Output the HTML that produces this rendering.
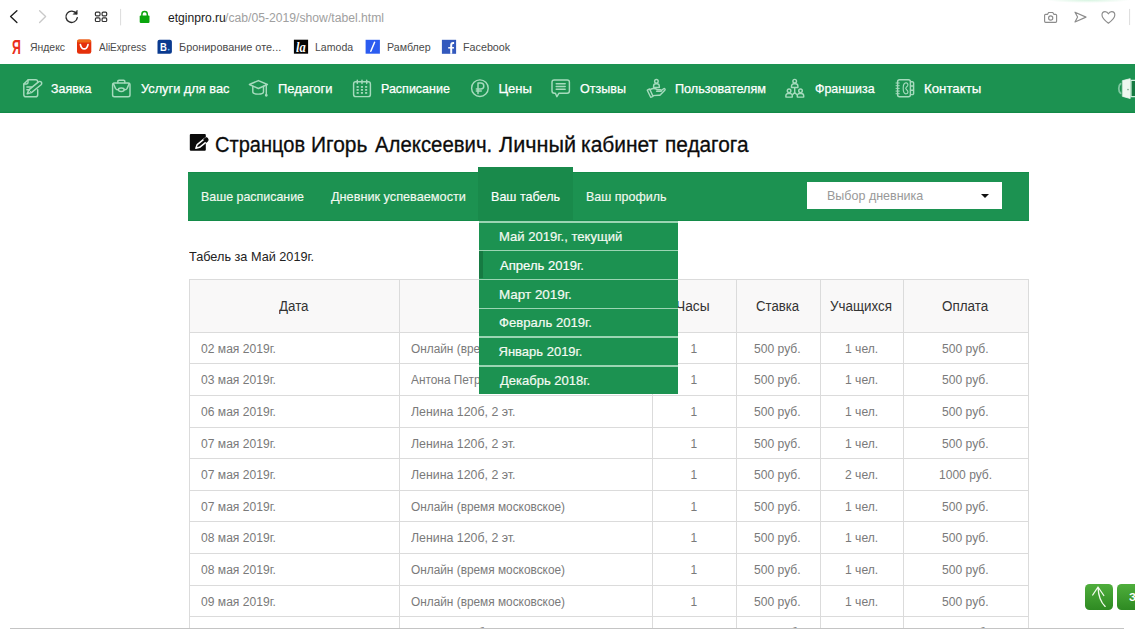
<!DOCTYPE html>
<html lang="ru"><head><meta charset="utf-8"><title>Табель</title>
<style>
html,body{margin:0;padding:0;background:#fff;}
body{width:1135px;height:629px;position:relative;overflow:hidden;font-family:"Liberation Sans",sans-serif;}
.t{position:absolute;white-space:pre;z-index:2;}
.a{position:absolute;}
#nav{left:0;top:63.5px;width:1135px;height:49.3px;background:#1c9251;box-shadow:inset 0 -1.2px 0 #128a47;}
#sub{left:188.3px;top:172.4px;width:840.6px;height:48.3px;background:#1c9251;box-shadow:inset 0 1px 0 #148b49, inset 0 -1px 0 #148b49;}
#tab{left:477.8px;top:166.8px;width:95.3px;height:53.9px;background:#198a4b;}
#sel{left:806.5px;top:182.2px;width:195.5px;height:26.8px;background:#fff;}
#arr{left:980.9px;top:193.8px;width:0;height:0;border-left:4.8px solid transparent;border-right:4.8px solid transparent;border-top:4.7px solid #111;}
#dd{left:478.7px;top:220.5px;width:199.7px;height:173.7px;background:#1c9251;z-index:5;}
#dd i{position:absolute;left:0;width:100%;height:1.6px;background:#9bd5b3;}
#dd b{position:absolute;left:0;top:30.2px;width:4.3px;height:27.6px;background:#167a42;}
#tbl{left:188.5px;top:279px;width:840.4px;height:360px;z-index:1;}
#tbl .hd{position:absolute;left:0;top:0;width:100%;height:53.3px;background:#f9f8f8;}
#tbl .h{position:absolute;left:0;width:100%;height:1px;background:#dbdbdb;}
#tbl .v{position:absolute;top:0;width:1px;height:100%;background:#dbdbdb;}
#bar{left:10px;top:627.6px;width:1114px;height:2px;background:#c4c4c4;z-index:7;}
.btn{position:absolute;top:583.6px;height:26.2px;border-radius:4.5px;background:linear-gradient(#4fae3c,#2e8a22);z-index:3;}
#glow{left:1046px;top:0;width:84px;height:2.5px;background:radial-gradient(ellipse at 50% 0,#d6f4e0 0,#fff 70%);}

</style></head>
<body>
<div class="a" id="glow"></div>
<div class="a" id="nav"></div>
<div class="a" id="sub"></div>
<div class="a" id="tab"></div>
<div class="a" id="sel"></div>
<div class="a" id="arr"></div>
<div class="a" id="tbl">
  <div class="hd"></div>
  <div class="h" style="top:0"></div>
  <div class="h" style="top:52.8px"></div>
  <div class="h" style="top:84.4px"></div>
  <div class="h" style="top:116px"></div>
  <div class="h" style="top:147.6px"></div>
  <div class="h" style="top:179.2px"></div>
  <div class="h" style="top:210.8px"></div>
  <div class="h" style="top:242.4px"></div>
  <div class="h" style="top:274px"></div>
  <div class="h" style="top:305.6px"></div>
  <div class="h" style="top:337.2px"></div>
  <div class="v" style="left:0"></div>
  <div class="v" style="left:210.4px"></div>
  <div class="v" style="left:463.3px"></div>
  <div class="v" style="left:547.7px"></div>
  <div class="v" style="left:631.2px"></div>
  <div class="v" style="left:714.8px"></div>
  <div class="v" style="left:839.4px"></div>
</div>
<div class="a" id="dd">
  <i style="top:0.6px"></i><i style="top:29.4px"></i><i style="top:58.2px"></i><i style="top:87px"></i><i style="top:115.8px"></i><i style="top:144.6px"></i>
  <b></b>
</div>
<div class="btn" style="left:1085.4px;width:27.6px"></div>
<div class="btn" style="left:1117px;width:30px"></div>
<div class="a" id="bar"></div>
<svg class="a" id="ico" style="left:0;top:0;z-index:3" width="1135" height="629" viewBox="0 0 1135 629" fill="none" stroke-linecap="round" stroke-linejoin="round">
 <!-- browser chrome: back / forward / reload / grid / lock -->
 <path d="M16.9 10.7 L10.6 16.6 L16.9 22.5" stroke="#1d1d1d" stroke-width="1.35"/>
 <path d="M39.6 10.7 L45.6 16.6 L39.6 22.5" stroke="#c9c9c9" stroke-width="1.35"/>
 <path d="M76.4 13.6 A5.7 5.7 0 1 0 77.3 17.6" stroke="#2a2a2a" stroke-width="1.35"/>
 <path d="M77.2 10.6 V14.3 H73.5 Z" fill="#2a2a2a" stroke="#2a2a2a" stroke-width="0.6"/>
 <g stroke="#333" stroke-width="1.2">
  <rect x="95.4" y="12.1" width="4.6" height="3.7" rx="1.1"/><rect x="102.1" y="12.1" width="4.6" height="3.7" rx="1.1"/>
  <rect x="95.4" y="17.8" width="4.6" height="3.7" rx="1.1"/><rect x="102.1" y="17.8" width="4.6" height="3.7" rx="1.1"/>
 </g>
 <path d="M120.6 9.3 V25" stroke="#dcdcdc" stroke-width="1"/>
 <rect x="139.7" y="15.6" width="9.8" height="7.3" rx="0.8" fill="#0aa60d" stroke="none"/>
 <path d="M141.9 15.8 V14.2 A2.7 2.7 0 0 1 147.3 14.2 V15.8" stroke="#0aa60d" stroke-width="1.5"/>
 <!-- right chrome icons -->
 <g stroke="#8c8c8c" stroke-width="1.15">
  <path d="M1045.6 14.3 H1047.6 L1048.6 12.5 H1052.8 L1053.8 14.3 H1055.6 A1 1 0 0 1 1056.6 15.3 V21.3 A1 1 0 0 1 1055.6 22.3 H1045.6 A1 1 0 0 1 1044.6 21.3 V15.3 A1 1 0 0 1 1045.6 14.3 Z"/>
  <circle cx="1050.7" cy="18" r="2.1"/>
  <path d="M1075 12.2 L1086 17.1 L1075 22 L1077.6 17.1 Z"/>
  <path d="M1108.4 23.2 C1104.5 20.2 1102 17.6 1102 14.9 C1102 12.9 1103.5 11.6 1105.1 11.6 C1106.5 11.6 1107.7 12.4 1108.4 13.8 C1109.1 12.4 1110.3 11.6 1111.7 11.6 C1113.3 11.6 1114.8 12.9 1114.8 14.9 C1114.8 17.6 1112.3 20.2 1108.4 23.2 Z"/>
 </g>
 <path d="M1129.6 9.3 V24.7" stroke="#dcdcdc" stroke-width="1"/>
 <!-- bookmark favicons -->
 <rect x="77" y="39.6" width="14.3" height="14.2" rx="2.2" fill="#e5300a" stroke="none"/>
 <rect x="77" y="39.6" width="14.3" height="3" rx="2" fill="#f07c1c" stroke="none" opacity=".75"/>
 <path d="M80.4 44.6 C81 47.4 82.4 48.9 84.2 48.9 C86 48.9 87.4 47.4 88 44.6" stroke="#fff" stroke-width="1.7"/>
 <path d="M159.5 39.7 H169.9 A2 2 0 0 1 171.9 41.7 V51.7 A2 2 0 0 1 169.9 53.7 H157.5 V41.7 A2 2 0 0 1 159.5 39.7 Z" fill="#0a3a8f" stroke="none"/>
 <circle cx="168.7" cy="49.6" r="0.95" fill="#5db8f7" stroke="none"/>
 <rect x="293.9" y="39.7" width="14.2" height="14" fill="#050505" stroke="none"/>
 <rect x="365.6" y="39.8" width="14.3" height="13.9" fill="#2b5cf0" stroke="none"/>
 <path d="M370.8 51.3 L374.6 42.2" stroke="#fff" stroke-width="1.5"/>
 <rect x="441.9" y="39.8" width="14.2" height="14" fill="#3359bd" stroke="none"/>
 <path d="M451.2 53.8 V45 C451.2 43.6 452 43 453.2 43 H454.1" stroke="#fff" stroke-width="2" stroke-linecap="butt"/>
 <path d="M448.2 47.8 H454" stroke="#fff" stroke-width="1.5" stroke-linecap="butt"/>
 <!-- nav icons -->
 <g stroke="#a6dbbd" stroke-width="1.45">
  <!-- 1 application -->
  <path d="M37.7 82.4 V81.8 A2.1 2.1 0 0 0 35.6 79.7 H28.2 L23.8 84 V94.7 A2.1 2.1 0 0 0 25.9 96.8 H35.6 A2.1 2.1 0 0 0 37.7 94.7 V89.6"/>
  <path d="M24 83.9 H26.6 A1.4 1.4 0 0 0 28 82.5 V79.9"/>
  <path d="M26.9 86.9 H31.8 M26.9 89.7 H29.4"/>
  <path d="M27.2 93.7 L28.8 89.9 L38.5 81.9 A1.9 1.9 0 0 1 41.1 84.7 L31.4 92.6 Z"/>
  <path d="M29.6 90.6 L31 92.2" stroke-width="1"/>
  <!-- 2 briefcase -->
  <rect x="112.6" y="83" width="17.4" height="13.8" rx="1.8"/>
  <path d="M117.8 82.8 V81.4 A1.2 1.2 0 0 1 119 80.2 H123.6 A1.2 1.2 0 0 1 124.8 81.4 V82.8"/>
  <path d="M113.4 83.6 L115.6 88.6 C116.4 89.7 117.4 89.8 118.4 89.8 M124.2 89.8 C125.2 89.8 126.2 89.7 127 88.6 L129.2 83.6"/>
  <ellipse cx="121.3" cy="89.7" rx="2.9" ry="1.7"/>
  <!-- 3 graduation cap -->
  <path d="M258.4 80.6 L267.4 84.5 L258.4 88.5 L249.4 84.5 Z"/>
  <path d="M252.8 86.2 V92 C252.8 93.4 255.4 94.1 258.2 94.1 C261 94.1 263.5 93.4 263.5 92 V86.2"/>
  <path d="M266.3 85 V95"/><circle cx="266.3" cy="95.3" r="0.7" fill="#a3d8b9"/>
  <!-- 4 calendar -->
  <rect x="353.6" y="81.8" width="16.8" height="14.8" rx="2.2"/>
  <path d="M357.3 80.1 V83.5 M362 80.1 V83.5 M366.7 80.1 V83.5"/>
  <g fill="#a3d8b9" stroke="none">
   <rect x="356.6" y="86" width="2.1" height="1.8"/><rect x="360.9" y="86" width="2.1" height="1.8"/><rect x="365.1" y="86" width="2.1" height="1.8"/>
   <rect x="356.6" y="89" width="2.1" height="1.8"/><rect x="360.9" y="89" width="2.1" height="1.8"/><rect x="365.1" y="89" width="2.1" height="1.8"/>
   <rect x="356.6" y="92" width="2.1" height="1.8"/><rect x="360.9" y="92" width="2.1" height="1.8"/><rect x="365.1" y="92" width="2.1" height="1.8"/>
  </g>
  <!-- 5 ruble -->
  <circle cx="479.9" cy="88.2" r="8.3"/>
  <path d="M478 93.6 V83 H480.8 A3 3 0 0 1 480.8 89 H476.3 M476.3 91 H481.3" stroke-width="1.5"/>
  <!-- 6 comments -->
  <path d="M554.2 79.9 H567.2 A2.2 2.2 0 0 1 569.4 82.1 V91 A2.2 2.2 0 0 1 567.2 93.2 H559 L556.9 96.7 L555.4 93.2 H554.2 A2.2 2.2 0 0 1 552 91 V82.1 A2.2 2.2 0 0 1 554.2 79.9 Z"/>
  <path d="M556.2 83.7 H565.2 M556.2 86.5 H565.2 M556.2 89.2 H565.2"/>
  <!-- 7 hand with user -->
  <circle cx="656.4" cy="81.3" r="1.8"/>
  <path d="M653.6 87.5 V86 A2.3 2.3 0 0 1 655.9 83.7 H657 A2.3 2.3 0 0 1 659.3 86 V87.5 Z"/>
  <path d="M647.3 90.2 L649.6 88.9 L653 96.3 L650.7 97.3 Z"/>
  <path d="M650.2 89.6 C652.4 88.2 655 88.2 657.4 89.6 L660.6 89.6 C661.8 89.6 661.8 91.3 660.6 91.3 H656.6 M660.8 91 L663.6 88.8 C664.6 88.2 665.6 89.4 664.8 90.3 L660.6 94.6 C660 95.1 659.4 95.3 658.6 95.3 L652.6 95.6"/>
  <!-- 8 franchise -->
  <circle cx="794.7" cy="81.2" r="1.8"/>
  <path d="M791.5 87.5 V86.2 A2.4 2.4 0 0 1 793.9 83.8 H795.5 A2.4 2.4 0 0 1 797.9 86.2 V87.5 Z"/>
  <circle cx="789.1" cy="90.8" r="1.8"/>
  <path d="M785.9 97.1 V95.8 A2.4 2.4 0 0 1 788.3 93.4 H789.9 A2.4 2.4 0 0 1 792.3 95.8 V97.1 Z"/>
  <circle cx="800.5" cy="90.8" r="1.8"/>
  <path d="M797.3 97.1 V95.8 A2.4 2.4 0 0 1 799.7 93.4 H801.3 A2.4 2.4 0 0 1 803.7 95.8 V97.1 Z"/>
  <path d="M794.7 87.8 V92.4 L792.7 94.4 M794.7 92.4 L796.7 94.4"/>
  <!-- 9 contacts -->
  <rect x="897.6" y="79.8" width="12.8" height="17" rx="2"/>
  <path d="M896 83 H899.3 M896 85.7 H899.3 M896 88.4 H899.3 M896 91.1 H899.3 M896 93.7 H899.3" stroke-width="1"/>
  <path d="M910.6 81.8 H912.4 A1.2 1.2 0 0 1 913.6 83 V93.4 A1.2 1.2 0 0 1 912.4 94.6 H910.6 M910.6 86 H913.4 M910.6 90.3 H913.4"/>
  <path d="M906.3 82.9 C904.2 82.6 903.2 84.6 903.2 88.3 C903.2 92 904.2 94.1 906.3 93.8 C907.8 93.6 908.3 92 907.6 90.8 L906.2 89.2 C905.6 88.6 905.6 87.9 906.2 87.3 L907.6 85.8 C908.3 84.7 907.8 83.1 906.3 82.9 Z" stroke-width="1.15"/>
 </g>
 <!-- exit door (cropped at right edge) -->
 <path d="M1120.6 83.8 C1118.2 85.6 1118.2 91.4 1120.6 93.2" stroke="#7fc7a0" stroke-width="1.8"/>
 <path d="M1122.7 80.6 L1130.2 78.7 V98.5 L1122.7 96.4 Z" fill="#eef8f0" stroke="#eef8f0" stroke-width="0.8"/>
 <circle cx="1128" cy="89.6" r="0.8" fill="#7aa58a" stroke="none"/>
 <rect x="1131" y="80.4" width="8" height="16.2" fill="#157a41" stroke="#cfeedd" stroke-width="1.2"/>
 <!-- heading icon -->
 <rect x="189.8" y="134.1" width="16" height="16.6" rx="1" fill="#0a0a0a" stroke="none"/>
 <path d="M195.9 148.2 L197.2 144.6 L204.6 138.7 A1.8 1.8 0 0 1 207 141.4 L199.6 147.3 Z" fill="#0a0a0a" stroke="#fff" stroke-width="1.5"/>
 <path d="M203.9 139.3 L206.3 142 L207.4 141 A1.6 1.6 0 0 0 205.1 138.4 Z" fill="#0a0a0a" stroke="#0a0a0a" stroke-width="1.2"/>
 <!-- scroll-up buttons -->
 <path d="M1098 587.2 C1098.4 595.2 1100.4 602 1105.2 606.4 M1092.7 595 L1098 587 L1103.8 595.5" stroke="#f4fbef" stroke-width="1.3"/>
</svg>

<div id="texts">
<span class="t" style="left:168.0px;top:11.7px;font-size:12.5px;line-height:13.96px;color:#1a1a1a;transform-origin:0 0;transform:scaleX(0.968);">etginpro.ru</span>
<span class="t" style="left:225.1px;top:11.7px;font-size:12.5px;line-height:13.96px;color:#a0a0a0;transform-origin:0 0;transform:scaleX(0.974);">/cab/05-2019/show/tabel.html</span>
<span class="t" style="left:12.0px;top:37.3px;font-size:19.6px;line-height:21.89px;color:#ea2f1b;font-weight:bold;z-index:4;transform-origin:0 0;transform:scaleX(0.633);">Я</span>
<span class="t" style="left:160.2px;top:40.7px;font-size:11.4px;line-height:12.73px;color:#fff;font-weight:bold;z-index:4;transform-origin:0 0;transform:scaleX(0.829);">B</span>
<span class="t" style="left:296.4px;top:39.4px;font-size:15px;line-height:16.75px;color:#fff;font-family:'Liberation Serif',serif;font-style:italic;font-weight:bold;z-index:4;transform-origin:0 0;transform:scaleX(0.833);">la</span>
<span class="t" style="left:1128.8px;top:590.6px;font-size:11.5px;line-height:12.85px;color:#fff;font-weight:bold;z-index:4;transform-origin:0 0;transform:scaleX(0.966);">Задать вопрос</span>
<span class="t" style="left:30.0px;top:41.0px;font-size:11px;line-height:12.29px;color:#4a4a4a;transform-origin:0 0;transform:scaleX(0.947);">Яндекс</span>
<span class="t" style="left:98.6px;top:41.0px;font-size:11px;line-height:12.29px;color:#4a4a4a;transform-origin:0 0;transform:scaleX(0.910);">AliExpress</span>
<span class="t" style="left:178.8px;top:41.0px;font-size:11px;line-height:12.29px;color:#4a4a4a;transform-origin:0 0;transform:scaleX(0.990);">Бронирование оте...</span>
<span class="t" style="left:314.9px;top:41.0px;font-size:11px;line-height:12.29px;color:#4a4a4a;transform-origin:0 0;transform:scaleX(0.959);">Lamoda</span>
<span class="t" style="left:386.6px;top:41.0px;font-size:11px;line-height:12.29px;color:#4a4a4a;transform-origin:0 0;transform:scaleX(0.970);">Рамблер</span>
<span class="t" style="left:462.8px;top:41.0px;font-size:11px;line-height:12.29px;color:#4a4a4a;transform-origin:0 0;transform:scaleX(0.977);">Facebook</span>
<span class="t" style="left:50.9px;top:82.2px;font-size:13px;line-height:14.52px;color:#ffffff;-webkit-text-stroke:0.25px #fff;transform-origin:0 0;transform:scaleX(0.956);">Заявка</span>
<span class="t" style="left:140.5px;top:82.2px;font-size:13px;line-height:14.52px;color:#ffffff;-webkit-text-stroke:0.25px #fff;transform-origin:0 0;transform:scaleX(0.983);">Услуги для вас</span>
<span class="t" style="left:278.3px;top:82.2px;font-size:13px;line-height:14.52px;color:#ffffff;-webkit-text-stroke:0.25px #fff;transform-origin:0 0;transform:scaleX(0.994);">Педагоги</span>
<span class="t" style="left:381.2px;top:82.2px;font-size:13px;line-height:14.52px;color:#ffffff;-webkit-text-stroke:0.25px #fff;transform-origin:0 0;transform:scaleX(0.961);">Расписание</span>
<span class="t" style="left:498.5px;top:82.2px;font-size:13px;line-height:14.52px;color:#ffffff;-webkit-text-stroke:0.25px #fff;transform-origin:0 0;transform:scaleX(1.000);">Цены</span>
<span class="t" style="left:580.2px;top:82.2px;font-size:13px;line-height:14.52px;color:#ffffff;-webkit-text-stroke:0.25px #fff;transform-origin:0 0;transform:scaleX(0.965);">Отзывы</span>
<span class="t" style="left:674.8px;top:82.2px;font-size:13px;line-height:14.52px;color:#ffffff;-webkit-text-stroke:0.25px #fff;transform-origin:0 0;transform:scaleX(0.972);">Пользователям</span>
<span class="t" style="left:814.5px;top:82.2px;font-size:13px;line-height:14.52px;color:#ffffff;-webkit-text-stroke:0.25px #fff;transform-origin:0 0;transform:scaleX(0.955);">Франшиза</span>
<span class="t" style="left:924.4px;top:82.2px;font-size:13px;line-height:14.52px;color:#ffffff;-webkit-text-stroke:0.25px #fff;transform-origin:0 0;transform:scaleX(1.019);">Контакты</span>
<span class="t" style="left:215.3px;top:133.1px;font-size:22px;line-height:24.57px;color:#0c0c0c;-webkit-text-stroke:0.3px #0c0c0c;transform-origin:0 0;transform:scaleX(0.911);">Странцов</span>
<span class="t" style="left:310.8px;top:133.1px;font-size:22px;line-height:24.57px;color:#0c0c0c;-webkit-text-stroke:0.3px #0c0c0c;transform-origin:0 0;transform:scaleX(0.951);">Игорь</span>
<span class="t" style="left:374.8px;top:133.1px;font-size:22px;line-height:24.57px;color:#0c0c0c;-webkit-text-stroke:0.3px #0c0c0c;transform-origin:0 0;transform:scaleX(0.925);">Алексеевич.</span>
<span class="t" style="left:498.7px;top:133.1px;font-size:22px;line-height:24.57px;color:#0c0c0c;-webkit-text-stroke:0.3px #0c0c0c;transform-origin:0 0;transform:scaleX(0.981);">Личный</span>
<span class="t" style="left:581.4px;top:133.1px;font-size:22px;line-height:24.57px;color:#0c0c0c;-webkit-text-stroke:0.3px #0c0c0c;transform-origin:0 0;transform:scaleX(0.953);">кабинет</span>
<span class="t" style="left:665.3px;top:133.1px;font-size:22px;line-height:24.57px;color:#0c0c0c;-webkit-text-stroke:0.3px #0c0c0c;transform-origin:0 0;transform:scaleX(0.946);">педагога</span>
<span class="t" style="left:201.2px;top:190.2px;font-size:13px;line-height:14.52px;color:#f2f9f0;-webkit-text-stroke:0.15px #f2f9f0;transform-origin:0 0;transform:scaleX(0.955);">Ваше расписание</span>
<span class="t" style="left:330.9px;top:190.2px;font-size:13px;line-height:14.52px;color:#f2f9f0;-webkit-text-stroke:0.15px #f2f9f0;transform-origin:0 0;transform:scaleX(0.977);">Дневник успеваемости</span>
<span class="t" style="left:490.9px;top:190.2px;font-size:13px;line-height:14.52px;color:#fff;-webkit-text-stroke:0.15px #fff;transform-origin:0 0;transform:scaleX(0.966);">Ваш табель</span>
<span class="t" style="left:586.2px;top:190.2px;font-size:13px;line-height:14.52px;color:#f2f9f0;-webkit-text-stroke:0.15px #f2f9f0;transform-origin:0 0;transform:scaleX(0.961);">Ваш профиль</span>
<span class="t" style="left:827.0px;top:189.2px;font-size:13px;line-height:14.52px;color:#999;transform-origin:0 0;transform:scaleX(0.962);">Выбор дневника</span>
<span class="t" style="left:498.5px;top:230.2px;font-size:13px;line-height:14.52px;color:#f4faf2;-webkit-text-stroke:0.2px #f4faf2;z-index:6;transform-origin:0 0;transform:scaleX(1.006);">Май 2019г., текущий</span>
<span class="t" style="left:499.5px;top:259.2px;font-size:13px;line-height:14.52px;color:#fff;-webkit-text-stroke:0.2px #f4faf2;z-index:6;transform-origin:0 0;transform:scaleX(1.006);">Апрель 2019г.</span>
<span class="t" style="left:498.5px;top:288.2px;font-size:13px;line-height:14.52px;color:#f4faf2;-webkit-text-stroke:0.2px #f4faf2;z-index:6;transform-origin:0 0;transform:scaleX(1.034);">Март 2019г.</span>
<span class="t" style="left:498.5px;top:316.2px;font-size:13px;line-height:14.52px;color:#f4faf2;-webkit-text-stroke:0.2px #f4faf2;z-index:6;transform-origin:0 0;transform:scaleX(1.008);">Февраль 2019г.</span>
<span class="t" style="left:498.5px;top:345.2px;font-size:13px;line-height:14.52px;color:#f4faf2;-webkit-text-stroke:0.2px #f4faf2;z-index:6;transform-origin:0 0;transform:scaleX(1.000);">Январь 2019г.</span>
<span class="t" style="left:499.5px;top:374.2px;font-size:13px;line-height:14.52px;color:#f4faf2;-webkit-text-stroke:0.2px #f4faf2;z-index:6;transform-origin:0 0;transform:scaleX(1.001);">Декабрь 2018г.</span>
<span class="t" style="left:189.0px;top:250.2px;font-size:13px;line-height:14.52px;color:#222;transform-origin:0 0;transform:scaleX(0.976);">Табель за Май 2019г.</span>
<span class="t" style="left:279.2px;top:299.3px;font-size:14px;line-height:15.64px;color:#333;transform-origin:0 0;transform:scaleX(0.952);">Дата</span>
<span class="t" style="left:505.2px;top:299.3px;font-size:14px;line-height:15.64px;color:#333;transform-origin:0 0;transform:scaleX(1.000);">Место</span>
<span class="t" style="left:676.2px;top:299.3px;font-size:14px;line-height:15.64px;color:#333;transform-origin:0 0;transform:scaleX(0.984);">Часы</span>
<span class="t" style="left:755.7px;top:299.3px;font-size:14px;line-height:15.64px;color:#333;transform-origin:0 0;transform:scaleX(0.940);">Ставка</span>
<span class="t" style="left:830.2px;top:299.3px;font-size:14px;line-height:15.64px;color:#333;transform-origin:0 0;transform:scaleX(0.957);">Учащихся</span>
<span class="t" style="left:942.2px;top:299.3px;font-size:14px;line-height:15.64px;color:#333;transform-origin:0 0;transform:scaleX(0.960);">Оплата</span>
<span class="t" style="left:200.9px;top:343.1px;font-size:12px;line-height:13.40px;color:#7a7a7a;transform-origin:0 0;transform:scaleX(1.008);">02 мая 2019г.</span>
<span class="t" style="left:411.0px;top:343.1px;font-size:12px;line-height:13.40px;color:#7a7a7a;transform-origin:0 0;transform:scaleX(0.987);">Онлайн (время московское)</span>
<span class="t" style="left:690.5px;top:343.1px;font-size:12px;line-height:13.40px;color:#7a7a7a;transform-origin:0 0;transform:scaleX(1.000);">1</span>
<span class="t" style="left:754.4px;top:343.1px;font-size:12px;line-height:13.40px;color:#7a7a7a;transform-origin:0 0;transform:scaleX(1.009);">500 руб.</span>
<span class="t" style="left:844.5px;top:343.1px;font-size:12px;line-height:13.40px;color:#7a7a7a;transform-origin:0 0;transform:scaleX(1.010);">1 чел.</span>
<span class="t" style="left:942.4px;top:343.1px;font-size:12px;line-height:13.40px;color:#7a7a7a;transform-origin:0 0;transform:scaleX(1.009);">500 руб.</span>
<span class="t" style="left:200.9px;top:374.1px;font-size:12px;line-height:13.40px;color:#7a7a7a;transform-origin:0 0;transform:scaleX(1.008);">03 мая 2019г.</span>
<span class="t" style="left:411.0px;top:374.1px;font-size:12px;line-height:13.40px;color:#7a7a7a;transform-origin:0 0;transform:scaleX(0.989);">Антона Петрова 150, 3 эт.</span>
<span class="t" style="left:690.5px;top:374.1px;font-size:12px;line-height:13.40px;color:#7a7a7a;transform-origin:0 0;transform:scaleX(1.000);">1</span>
<span class="t" style="left:754.4px;top:374.1px;font-size:12px;line-height:13.40px;color:#7a7a7a;transform-origin:0 0;transform:scaleX(1.009);">500 руб.</span>
<span class="t" style="left:844.5px;top:374.1px;font-size:12px;line-height:13.40px;color:#7a7a7a;transform-origin:0 0;transform:scaleX(1.010);">1 чел.</span>
<span class="t" style="left:942.4px;top:374.1px;font-size:12px;line-height:13.40px;color:#7a7a7a;transform-origin:0 0;transform:scaleX(1.009);">500 руб.</span>
<span class="t" style="left:200.9px;top:406.1px;font-size:12px;line-height:13.40px;color:#7a7a7a;transform-origin:0 0;transform:scaleX(1.008);">06 мая 2019г.</span>
<span class="t" style="left:411.0px;top:406.1px;font-size:12px;line-height:13.40px;color:#7a7a7a;transform-origin:0 0;transform:scaleX(1.030);">Ленина 120б, 2 эт.</span>
<span class="t" style="left:690.5px;top:406.1px;font-size:12px;line-height:13.40px;color:#7a7a7a;transform-origin:0 0;transform:scaleX(1.000);">1</span>
<span class="t" style="left:754.4px;top:406.1px;font-size:12px;line-height:13.40px;color:#7a7a7a;transform-origin:0 0;transform:scaleX(1.009);">500 руб.</span>
<span class="t" style="left:844.5px;top:406.1px;font-size:12px;line-height:13.40px;color:#7a7a7a;transform-origin:0 0;transform:scaleX(1.010);">1 чел.</span>
<span class="t" style="left:942.4px;top:406.1px;font-size:12px;line-height:13.40px;color:#7a7a7a;transform-origin:0 0;transform:scaleX(1.009);">500 руб.</span>
<span class="t" style="left:200.9px;top:438.1px;font-size:12px;line-height:13.40px;color:#7a7a7a;transform-origin:0 0;transform:scaleX(1.008);">07 мая 2019г.</span>
<span class="t" style="left:411.0px;top:438.1px;font-size:12px;line-height:13.40px;color:#7a7a7a;transform-origin:0 0;transform:scaleX(1.030);">Ленина 120б, 2 эт.</span>
<span class="t" style="left:690.5px;top:438.1px;font-size:12px;line-height:13.40px;color:#7a7a7a;transform-origin:0 0;transform:scaleX(1.000);">1</span>
<span class="t" style="left:754.4px;top:438.1px;font-size:12px;line-height:13.40px;color:#7a7a7a;transform-origin:0 0;transform:scaleX(1.009);">500 руб.</span>
<span class="t" style="left:844.5px;top:438.1px;font-size:12px;line-height:13.40px;color:#7a7a7a;transform-origin:0 0;transform:scaleX(1.010);">1 чел.</span>
<span class="t" style="left:942.4px;top:438.1px;font-size:12px;line-height:13.40px;color:#7a7a7a;transform-origin:0 0;transform:scaleX(1.009);">500 руб.</span>
<span class="t" style="left:200.9px;top:469.1px;font-size:12px;line-height:13.40px;color:#7a7a7a;transform-origin:0 0;transform:scaleX(1.008);">07 мая 2019г.</span>
<span class="t" style="left:411.0px;top:469.1px;font-size:12px;line-height:13.40px;color:#7a7a7a;transform-origin:0 0;transform:scaleX(1.030);">Ленина 120б, 2 эт.</span>
<span class="t" style="left:690.5px;top:469.1px;font-size:12px;line-height:13.40px;color:#7a7a7a;transform-origin:0 0;transform:scaleX(1.000);">1</span>
<span class="t" style="left:754.4px;top:469.1px;font-size:12px;line-height:13.40px;color:#7a7a7a;transform-origin:0 0;transform:scaleX(1.009);">500 руб.</span>
<span class="t" style="left:844.5px;top:469.1px;font-size:12px;line-height:13.40px;color:#7a7a7a;transform-origin:0 0;transform:scaleX(1.010);">2 чел.</span>
<span class="t" style="left:939.0px;top:469.1px;font-size:12px;line-height:13.40px;color:#7a7a7a;transform-origin:0 0;transform:scaleX(1.004);">1000 руб.</span>
<span class="t" style="left:200.9px;top:501.1px;font-size:12px;line-height:13.40px;color:#7a7a7a;transform-origin:0 0;transform:scaleX(1.008);">07 мая 2019г.</span>
<span class="t" style="left:411.0px;top:501.1px;font-size:12px;line-height:13.40px;color:#7a7a7a;transform-origin:0 0;transform:scaleX(0.987);">Онлайн (время московское)</span>
<span class="t" style="left:690.5px;top:501.1px;font-size:12px;line-height:13.40px;color:#7a7a7a;transform-origin:0 0;transform:scaleX(1.000);">1</span>
<span class="t" style="left:754.4px;top:501.1px;font-size:12px;line-height:13.40px;color:#7a7a7a;transform-origin:0 0;transform:scaleX(1.009);">500 руб.</span>
<span class="t" style="left:844.5px;top:501.1px;font-size:12px;line-height:13.40px;color:#7a7a7a;transform-origin:0 0;transform:scaleX(1.010);">1 чел.</span>
<span class="t" style="left:942.4px;top:501.1px;font-size:12px;line-height:13.40px;color:#7a7a7a;transform-origin:0 0;transform:scaleX(1.009);">500 руб.</span>
<span class="t" style="left:200.9px;top:532.1px;font-size:12px;line-height:13.40px;color:#7a7a7a;transform-origin:0 0;transform:scaleX(1.008);">08 мая 2019г.</span>
<span class="t" style="left:411.0px;top:532.1px;font-size:12px;line-height:13.40px;color:#7a7a7a;transform-origin:0 0;transform:scaleX(1.030);">Ленина 120б, 2 эт.</span>
<span class="t" style="left:690.5px;top:532.1px;font-size:12px;line-height:13.40px;color:#7a7a7a;transform-origin:0 0;transform:scaleX(1.000);">1</span>
<span class="t" style="left:754.4px;top:532.1px;font-size:12px;line-height:13.40px;color:#7a7a7a;transform-origin:0 0;transform:scaleX(1.009);">500 руб.</span>
<span class="t" style="left:844.5px;top:532.1px;font-size:12px;line-height:13.40px;color:#7a7a7a;transform-origin:0 0;transform:scaleX(1.010);">1 чел.</span>
<span class="t" style="left:942.4px;top:532.1px;font-size:12px;line-height:13.40px;color:#7a7a7a;transform-origin:0 0;transform:scaleX(1.009);">500 руб.</span>
<span class="t" style="left:200.9px;top:564.1px;font-size:12px;line-height:13.40px;color:#7a7a7a;transform-origin:0 0;transform:scaleX(1.008);">08 мая 2019г.</span>
<span class="t" style="left:411.0px;top:564.1px;font-size:12px;line-height:13.40px;color:#7a7a7a;transform-origin:0 0;transform:scaleX(0.987);">Онлайн (время московское)</span>
<span class="t" style="left:690.5px;top:564.1px;font-size:12px;line-height:13.40px;color:#7a7a7a;transform-origin:0 0;transform:scaleX(1.000);">1</span>
<span class="t" style="left:754.4px;top:564.1px;font-size:12px;line-height:13.40px;color:#7a7a7a;transform-origin:0 0;transform:scaleX(1.009);">500 руб.</span>
<span class="t" style="left:844.5px;top:564.1px;font-size:12px;line-height:13.40px;color:#7a7a7a;transform-origin:0 0;transform:scaleX(1.010);">1 чел.</span>
<span class="t" style="left:942.4px;top:564.1px;font-size:12px;line-height:13.40px;color:#7a7a7a;transform-origin:0 0;transform:scaleX(1.009);">500 руб.</span>
<span class="t" style="left:200.9px;top:596.1px;font-size:12px;line-height:13.40px;color:#7a7a7a;transform-origin:0 0;transform:scaleX(1.008);">09 мая 2019г.</span>
<span class="t" style="left:411.0px;top:596.1px;font-size:12px;line-height:13.40px;color:#7a7a7a;transform-origin:0 0;transform:scaleX(0.987);">Онлайн (время московское)</span>
<span class="t" style="left:690.5px;top:596.1px;font-size:12px;line-height:13.40px;color:#7a7a7a;transform-origin:0 0;transform:scaleX(1.000);">1</span>
<span class="t" style="left:754.4px;top:596.1px;font-size:12px;line-height:13.40px;color:#7a7a7a;transform-origin:0 0;transform:scaleX(1.009);">500 руб.</span>
<span class="t" style="left:844.5px;top:596.1px;font-size:12px;line-height:13.40px;color:#7a7a7a;transform-origin:0 0;transform:scaleX(1.010);">1 чел.</span>
<span class="t" style="left:942.4px;top:596.1px;font-size:12px;line-height:13.40px;color:#7a7a7a;transform-origin:0 0;transform:scaleX(1.009);">500 руб.</span>
<span class="t" style="left:199.9px;top:627.1px;font-size:12px;line-height:13.40px;color:#7a7a7a;transform-origin:0 0;transform:scaleX(1.022);">10 мая 2019г.</span>
<span class="t" style="left:411.0px;top:627.1px;font-size:12px;line-height:13.40px;color:#7a7a7a;transform-origin:0 0;transform:scaleX(1.030);">Ленина 120б, 2 эт.</span>
<span class="t" style="left:690.5px;top:627.1px;font-size:12px;line-height:13.40px;color:#7a7a7a;transform-origin:0 0;transform:scaleX(1.000);">1</span>
<span class="t" style="left:754.4px;top:627.1px;font-size:12px;line-height:13.40px;color:#7a7a7a;transform-origin:0 0;transform:scaleX(1.009);">500 руб.</span>
<span class="t" style="left:844.5px;top:627.1px;font-size:12px;line-height:13.40px;color:#7a7a7a;transform-origin:0 0;transform:scaleX(1.010);">1 чел.</span>
<span class="t" style="left:942.4px;top:627.1px;font-size:12px;line-height:13.40px;color:#7a7a7a;transform-origin:0 0;transform:scaleX(1.009);">500 руб.</span>
</div>
</body></html>
